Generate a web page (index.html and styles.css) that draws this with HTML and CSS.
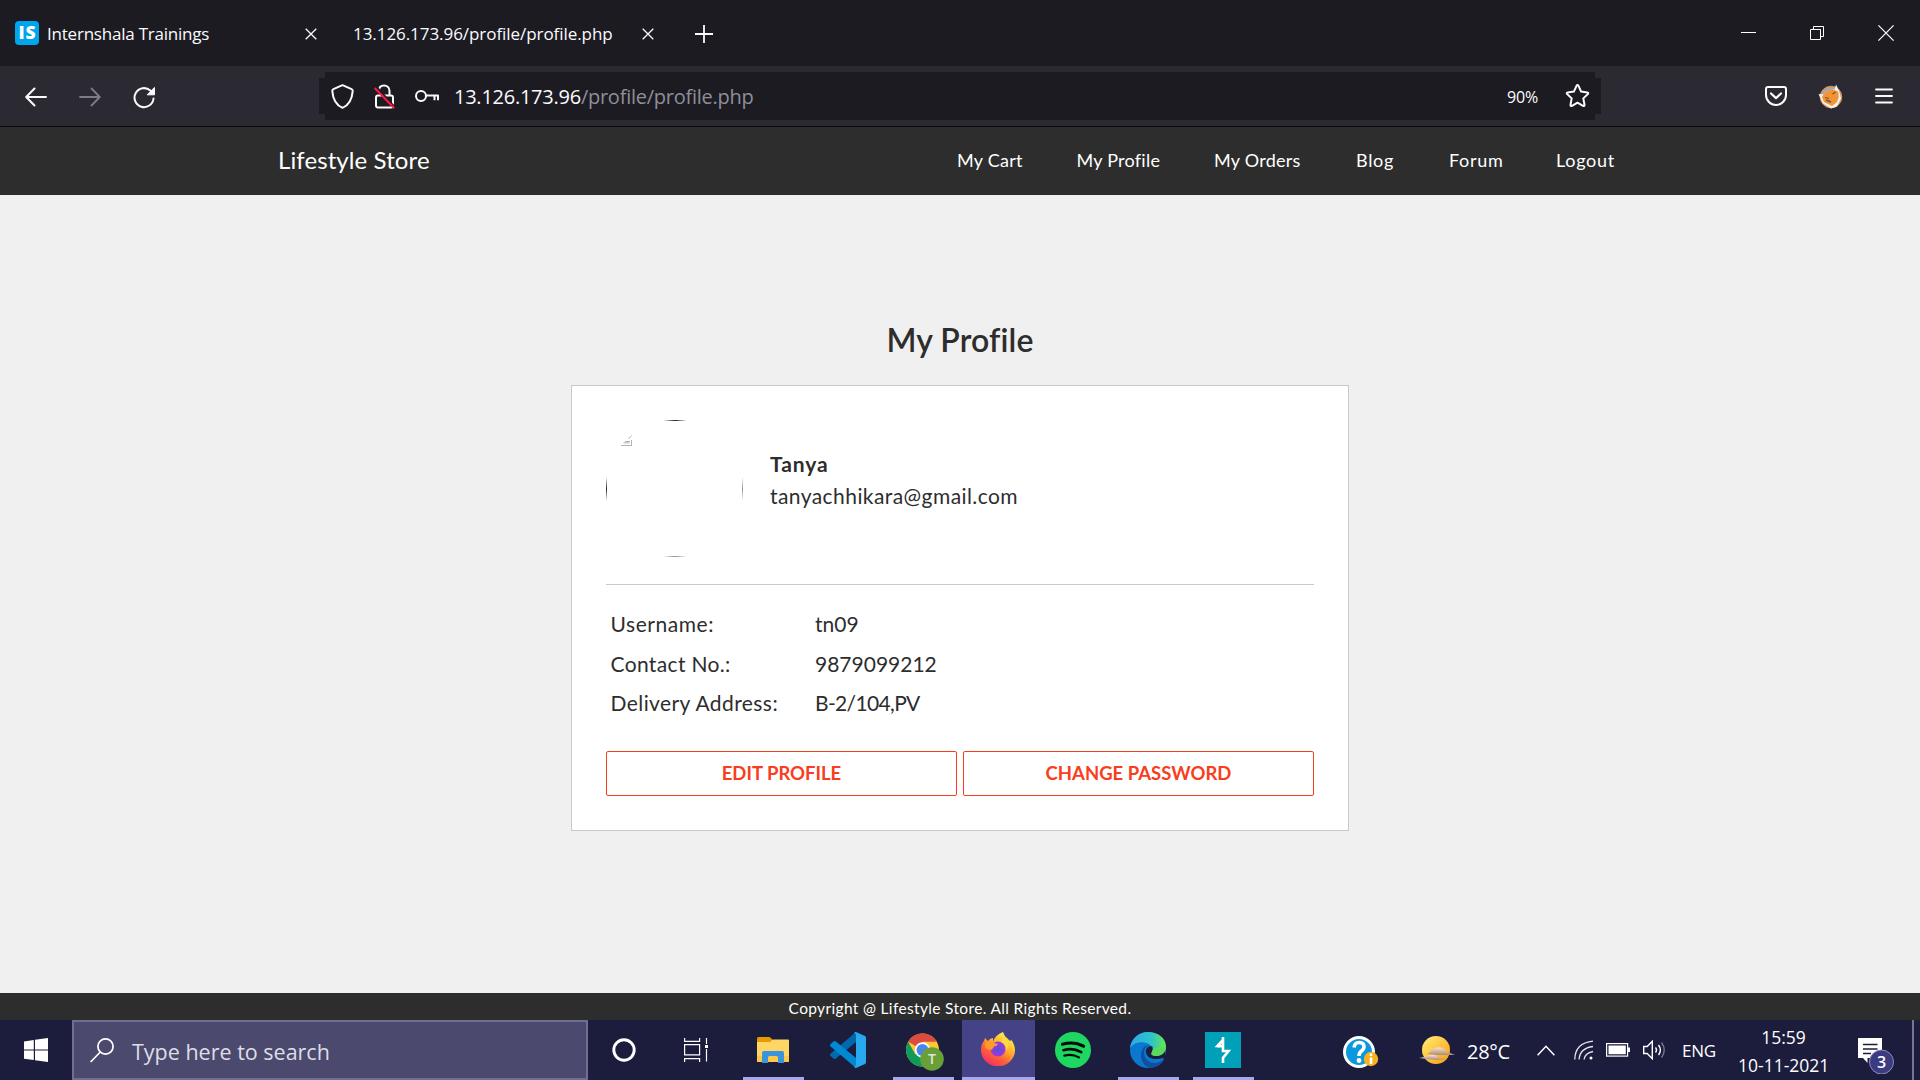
FILE: index.html
```html
<!DOCTYPE html>
<html lang="en">
<head>
<meta charset="utf-8">
<title>Lifestyle Store</title>
<link rel="stylesheet" href="styles.css">
</head>
<body>
<header class="tabs">
  <div class="tab tab-first">
    <svg class="favicon" width="24" height="24" viewBox="0 0 24 24"><rect width="24" height="24" rx="4" fill="#00a5ec"/><text x="12" y="18.4" text-anchor="middle" class="favicon-text" textLength="17">IS</text></svg>
    <span class="tab-title tab-title-narrow">Internshala Trainings</span>
    <svg class="tab-close" width="12" height="12" viewBox="0 0 12 12"><path d="M.7.7l10.600 10.600M11.300.7L.7 11.300" stroke="#fbfbfe" stroke-width="1.300"/></svg>
  </div>
  <div class="tab tab-second">
    <span class="tab-title">13.126.173.96/profile/profile.php</span>
    <svg class="tab-close" width="12" height="12" viewBox="0 0 12 12"><path d="M.7.7l10.600 10.600M11.300.7L.7 11.300" stroke="#fbfbfe" stroke-width="1.300"/></svg>
  </div>
  <svg class="new-tab" width="18" height="18" viewBox="0 0 18 18"><path d="M9 0v18M0 9h18" stroke="#fbfbfe" stroke-width="1.800"/></svg>
  <div class="window-buttons">
    <svg width="15" height="16" viewBox="0 0 15 16"><path d="M0 7.500h15" stroke="#fff"/></svg>
    <svg width="14" height="14" viewBox="0 0 14 14" fill="none" stroke="#fff"><path d="M.5 3.500h10v10H.5zM3.500 3.500v-3h10v10h-3"/></svg>
    <svg width="16" height="16" viewBox="0 0 16 16"><path d="M.4.4l15.200 15.200M15.600.4L.4 15.600" stroke="#fff" stroke-width="1.200"/></svg>
  </div>
</header>

<div class="toolbar">
  <div class="nav-buttons">
    <svg width="22" height="20" viewBox="0 0 22 20" fill="none" stroke="#fbfbfe" stroke-width="2" stroke-linecap="round" stroke-linejoin="round"><path d="M21 10H1.500M9.500 1.500L1.200 10l8.300 8.500"/></svg>
    <svg width="22" height="20" viewBox="0 0 22 20" fill="none" stroke="#7d7c84" stroke-width="1.800" stroke-linecap="round" stroke-linejoin="round"><path d="M1 10h19.500M12.500 1.500l8.300 8.500-8.300 8.500"/></svg>
    <svg width="23" height="23" viewBox="0 0 23 23" fill="none" stroke="#fbfbfe" stroke-width="2" stroke-linecap="round"><path d="M20.500 12.500A9.500 9.500 0 1 1 17.300 4.500l2 1.700"/><path d="M21.500 1.800v7h-7z" fill="#fbfbfe" stroke-width="1" stroke-linejoin="round"/></svg>
  </div>
  <div class="url-bar">
    <svg width="23" height="25" viewBox="0 0 23 25" fill="none" stroke="#fbfbfe" stroke-width="2" stroke-linejoin="round"><path d="M11.500 1.200l9.100 3.900c.9.400 1.200 1.100 1.100 2-.6 7.600-3.500 13.900-10.200 16.700C4.800 21 1.900 14.700 1.300 7.100c-.1-.9.200-1.600 1.100-2z"/></svg>
    <svg width="21" height="25" viewBox="0 0 21 25" fill="none" stroke="#fbfbfe" stroke-width="2"><path d="M5 6.500C5 3.500 7 1.500 10 1.500s5.500 2.300 5.500 5.500v4.500"/><rect x="2" y="11.500" width="17" height="12" rx="2"/><path d="M2.500 3l19 21" stroke="#1c1b22" stroke-width="2"/><path d="M.7 4l19.600 20.200" stroke="#ff1744" stroke-width="2"/></svg>
    <svg width="24" height="14" viewBox="0 0 24 14" fill="none" stroke="#fbfbfe" stroke-width="2"><circle cx="6" cy="7" r="5"/><path d="M11 6.500h12v4.800M19.500 6.500v4.800" stroke-linejoin="round"/></svg>
    <span class="url"><b>13.126.173.96</b>/profile/profile.php</span>
    <span class="zoom-level">90%</span>
    <svg width="25" height="24" viewBox="0 0 25 24" fill="none" stroke="#fbfbfe" stroke-width="2" stroke-linejoin="round"><path d="M11.500 1.800q1-1.400 2 0l2.600 5.800 6.200.8q1.600.4.500 1.700l-4.500 4.300 1.200 6.300q.1 1.700-1.500 1.100L12.500 18.700 7 21.800q-1.600.6-1.500-1.100l1.200-6.300-4.500-4.300q-1.100-1.300.5-1.700l6.200-.8z"/></svg>
  </div>
  <div class="tool-icons">
    <svg width="22" height="20" viewBox="0 0 22 20" fill="none" stroke="#fbfbfe" stroke-width="2" stroke-linecap="round" stroke-linejoin="round"><path d="M3 1h16q2 0 2 2v6a10 10 0 0 1-20 0V3q0-2 2-2z"/><path d="M6 7.500l5 4.600 5-4.600" stroke-width="2.200"/></svg>
    <svg width="25" height="25" viewBox="0 0 25 25"><circle cx="13" cy="13" r="10.800" fill="#a9a6a4" stroke="#ec8a35" stroke-width="1"/><path d="M.5 10l5 .5q5-5 11-5L18 .5l3 6q2 7 2 8l-4 8-6 2-8-5z" fill="#f2f0ee"/><path d="M4 13q3-6.500 11-7.500l5 2q2 6-1.500 11l-4.500 3.500-8-4z" fill="#f39333"/><path d="M7 13.500l4 1M14.500 10l3-2" stroke="#8c4c18" stroke-width="1.200"/><path d="M8 16l5 2" stroke="#5b5c66" stroke-width="1.800"/></svg>
    <svg width="18" height="16" viewBox="0 0 18 16"><path d="M1 1.500h16M1 8h16M1 14.500h16" stroke="#fbfbfe" stroke-width="1.800" stroke-linecap="round"/></svg>
  </div>
</div>

<nav class="site-nav">
  <a class="brand">Lifestyle Store</a>
  <div class="links"><a>My Cart</a><a>My Profile</a><a>My Orders</a><a class="wide">Blog</a><a class="wide">Forum</a><a class="wide">Logout</a></div>
</nav>

<main class="page">
  <h1>My Profile</h1>
  <section class="card">
    <div class="identity">
      <svg class="avatar" width="137" height="137" viewBox="0 0 137 137">
        <defs>
          <linearGradient id="fadeH"><stop offset="0" stop-color="#222" stop-opacity="0"/><stop offset=".5" stop-color="#222"/><stop offset="1" stop-color="#222" stop-opacity="0"/></linearGradient>
          <linearGradient id="fadeV" x2="0" y2="1"><stop offset="0" stop-color="#222" stop-opacity="0"/><stop offset=".5" stop-color="#222"/><stop offset="1" stop-color="#222" stop-opacity="0"/></linearGradient>
        </defs>
        <rect x="57" width="24" height="1" fill="url(#fadeH)"/><rect y="57" width="1" height="24" fill="url(#fadeV)"/>
        <rect x="57" y="136" width="24" height="1" fill="url(#fadeH)" opacity=".5"/><rect x="136" y="57" width="1" height="24" fill="url(#fadeV)" opacity=".5"/>
        <path d="M15 25.500h11M25.500 20v6M17.500 22.800h6M19 21.500h5M22.500 19l3-3.500" stroke="#b4b4b4" fill="none"/>
      </svg>
      <div class="who"><strong>Tanya</strong><span>tanyachhikara@gmail.com</span></div>
    </div>
    <dl class="details">
      <dt>Username:</dt><dd>tn09</dd>
      <dt>Contact No.:</dt><dd>9879099212</dd>
      <dt class="long">Delivery Address:</dt><dd class="address">B-2/104,PV</dd>
    </dl>
    <div class="actions"><a>EDIT PROFILE</a><a>CHANGE PASSWORD</a></div>
  </section>
</main>
<footer class="site-footer">Copyright @ Lifestyle Store. All Rights Reserved.</footer>

<div class="taskbar">
  <div class="start"><svg width="24" height="24" viewBox="0 0 24 24" fill="#fff"><path d="M0 3.400L9.800 2v9.500H0zM11 1.800L24 0v11.500H11zM0 12.600h9.800v9.500L0 20.700zM11 12.600h13V24l-13-1.800z"/></svg></div>
  <div class="search">
    <svg width="24" height="25" viewBox="0 0 24 25" fill="none" stroke="#fff" stroke-width="1.700"><circle cx="15.500" cy="8.500" r="7.600"/><path d="M10.300 14L.6 24"/></svg>
    <span>Type here to search</span>
  </div>
  <div class="slot small"><svg width="24" height="24" viewBox="0 0 24 24"><circle cx="12" cy="12" r="10.200" fill="none" stroke="#fff" stroke-width="2.900"/></svg></div>
  <div class="slot small last"><svg width="24" height="24" viewBox="0 0 24 24" fill="none" stroke="#fff" stroke-width="1.200"><path d="M.6 0v3.400h15V0M.6 24v-3.400h15V24M.6 6.600h15v10.200H.6zM22.500 0v6M22.500 11v12.500"/><path d="M21 7h3v3h-3z" fill="#fff" stroke="none"/></svg></div>
  <div class="slot open"><svg width="32" height="26" viewBox="0 0 32 26"><path d="M0 1.500Q0 0 1.500 0h11L15 2v4H0z" fill="#e59b00"/><path d="M0 5h13l2.500-2.500H31q1 0 1 1V24q0 1-1 1H1q-1 0-1-1z" fill="#ffd666"/><path d="M0 19h32v5q0 1-1 1H1q-1 0-1-1z" fill="#fcc84a"/><path d="M5 26V16q0-2 2-2h18.500q1.500 0 1.500 2v10h-6v-5.500q0-1.500-1.500-1.500h-7q-1.500 0-1.500 1.500V26z" fill="#3a94dc"/></svg></div>
  <div class="slot"><svg width="36" height="36" viewBox="0 0 36 36"><path d="M26 0v10L6 26.500q-1.400 1-2.600 0L.6 24q-1.200-1.300 0-2.600z" fill="#0069ad"/><path d="M26 36V26L6 9.500q-1.400-1-2.600 0L.6 12q-1.200 1.300 0 2.600z" fill="#0088d3"/><path d="M26 0l9 4q1 .6 1 1.800v24.400q0 1.200-1 1.800l-9 4q-1 .1-2-1.200l2-1V2.200l-2-1q1-1.300 2-1.200z" fill="#28a8ef"/></svg></div>
  <div class="slot open"><svg class="chrome" width="38" height="38" viewBox="0 0 38 38"><circle cx="16.500" cy="17" r="16.500" fill="#fcc934"/><path d="M16.500 17L2.200 8.800A16.500 16.500 0 0 1 30.800 8.800H16.500z" fill="#dd4b40"/><path d="M2.200 8.800A16.500 16.500 0 0 0 16.500 33.500L23.600 21.100 9.300 21.200z" fill="#109b5a"/><circle cx="16.500" cy="17" r="7.700" fill="#fff"/><circle cx="16.500" cy="17" r="6" fill="#4786ef"/><circle cx="26" cy="26" r="11.800" fill="#689f38"/><text x="26" y="31" text-anchor="middle" class="chrome-badge">T</text></svg></div>
  <div class="slot open active"><svg width="34" height="34" viewBox="0 0 34 34"><defs><linearGradient id="ff" x1=".85" y1=".1" x2=".25" y2="1"><stop offset="0" stop-color="#fff14d"/><stop offset=".35" stop-color="#ffb52d"/><stop offset=".65" stop-color="#ff6338"/><stop offset="1" stop-color="#f52a64"/></linearGradient><radialGradient id="ffc"><stop offset="0" stop-color="#5b4bdc"/><stop offset="1" stop-color="#9c3bd8"/></radialGradient></defs><path d="M22 0q1 4 5 7l2 2q1-.5 1-1.500 4 5 4 11A17 16 0 0 1 0 18q0-6 3-9l1-3 3 3q2-3 5-3v4q2-7 10-10z" fill="url(#ff)"/><circle cx="17" cy="17" r="7.500" fill="url(#ffc)"/><path d="M4 11q5-2 9 0l4 1q-1 2-4 2.500l-2 3q-4 1-7-2z" fill="#ff9a2b"/><path d="M20 10q6 2 5 9 4-5 1-11l-4-4z" fill="#ffdc3e"/></svg></div>
  <div class="slot"><svg width="36" height="36" viewBox="0 0 36 36" fill="none" stroke="#060b09" stroke-linecap="round"><circle cx="18" cy="18" r="18" fill="#1ed760" stroke="none"/><path d="M7.500 12.200q11.500-3.200 21 2" stroke-width="3.200"/><path d="M8.500 18.200q9.500-2.700 17.700 1.900" stroke-width="2.700"/><path d="M9.300 23.600q8-2 14.700 1.800" stroke-width="2.200"/></svg></div>
  <div class="slot open"><svg width="36" height="36" viewBox="0 0 36 36"><defs><linearGradient id="eg"><stop offset="0" stop-color="#2fa8e8"/><stop offset=".6" stop-color="#2cc4c8"/><stop offset="1" stop-color="#6be848"/></linearGradient></defs><circle cx="18" cy="18" r="18" fill="#0b78d0"/><path d="M0 16A18 18 0 0 1 18 0c11 0 18 7 18 14.500 0 6-4.500 9.500-9.500 9.500-4 0-6-1.500-5-3 2-3 1-9-7-10.500C8 9.500 3 12 0 16z" fill="url(#eg)"/><path d="M22 14c-6-2-9 4-7.500 9.500 2 8 12 9.500 18.500 4.500q1.500-.7 1 .5A18 18 0 0 1 20 36C10 33 9 20 14 15q4-3 8-1z" fill="#104f9c"/><path d="M22.500 14.500c-4-1-7 2-6.500 6 1 6 9 8 17 5.500l2 .5 1 3-1-12c-1 5-5 6.500-8.500 6.500-4 0-6-1.500-5-3q2-3 1-6.500z" fill="#1c1c3c"/><path d="M36 14.500c0 6-4.500 9.500-9.500 9.500-4 0-6-1.500-5-3l1.500-4z" fill="#5ddb58"/></svg></div>
  <div class="slot open"><svg width="36" height="36" viewBox="0 0 36 36"><rect width="36" height="36" fill="#00a1b8"/><path d="M18 5v9h-5.500L18 8M18 14l-5.500.5L18 14v5h5.500L18 26v5M18 19h6" fill="none" stroke="#fff" stroke-width="2.600"/></svg></div>

  <div class="tray">
    <svg width="36" height="32" viewBox="0 0 36 32"><circle cx="16" cy="16" r="14.500" fill="#0b98dc" stroke="#fff" stroke-width="3"/><path d="M11 11.500q.5-5 5.200-5 4.800 0 4.800 4.300 0 2.400-2.600 4.200-2.400 1.700-2.400 5" fill="none" stroke="#fff" stroke-width="3.600"/><circle cx="16" cy="24.500" r="2.400" fill="#fff"/><circle cx="28" cy="23" r="7.200" fill="#f8b120"/><path d="M28 21.500V28M28 17.500V20" stroke="#fff" stroke-width="2.600"/></svg>
    <svg width="38" height="30" viewBox="0 0 38 30"><defs><linearGradient id="sun" x2="1" y2="1"><stop offset="0" stop-color="#fff07a"/><stop offset="1" stop-color="#ff9a0a"/></linearGradient><linearGradient id="cloud" x2="0" y2="1"><stop offset="0" stop-color="#f6e4cf"/><stop offset="1" stop-color="#a98c78"/></linearGradient></defs><circle cx="18" cy="15" r="14" fill="url(#sun)"/><path d="M9 19q3-1 5-4 5-4 10-2 4 1 4 4 5 1 9 3H18z" fill="url(#cloud)"/><path d="M1 23q7-1 11-3 6-1 9 3 6 0 8 1-14 2-28-1z" fill="url(#cloud)"/></svg>
    <span class="temp">28°C</span>
    <svg class="up" width="18" height="11" viewBox="0 0 18 11"><path d="M.6 10.300L9 1.300l8.400 9" fill="none" stroke="#fff" stroke-width="1.500"/></svg>
    <svg width="20" height="20" viewBox="0 0 20 20" fill="none" stroke="#e5e5ef" stroke-width="1.300"><path d="M.8 19.500Q1 3 19 1.200M5 19.500Q6 8 19 6.500M10 19.500Q11 13 19 11.500"/><circle cx="17" cy="18" r="1.500" fill="#fff" stroke="none"/></svg>
    <svg width="24" height="14" viewBox="0 0 24 14"><rect x=".6" y=".6" width="21" height="12.500" fill="none" stroke="#fff" stroke-width="1.200"/><path d="M2.500 2.500h17.300v8.800H2.500zM22 4.500h2v4.500h-2z" fill="#fff"/></svg>
    <svg width="23" height="20" viewBox="0 0 23 20" fill="none" stroke="#fff" stroke-width="1.400"><path d="M.7 6.500h3.500L9.300 1.300v17.400L4.200 13.500H.7zM12.500 7.500q2 2.500 0 5M15.500 5q3.800 5 0 10"/><path d="M18.500 2.500q5.500 7.500 0 15" stroke="#77758f"/></svg>
    <span class="lang">ENG</span>
    <div class="clock"><span>15:59</span><span>10-11-2021</span></div>
    <svg class="notify" width="38" height="36" viewBox="0 0 38 36"><path d="M1 0h24v20H10.500v5L6 20H1z" fill="#fff"/><path d="M6 6.500h14.500M6 11h14.500M6 15.500h8" stroke="#1c1c3c" stroke-width="1.300"/><circle cx="24.500" cy="24" r="12" fill="#3d3b80" stroke="#8d8bbd" stroke-width="1"/><text x="24.500" y="29.800" text-anchor="middle" class="notify-count">3</text></svg>
    <i class="edge"></i>
  </div>
</div>
</body>
</html>
```
FILE: styles.css
```css
* { box-sizing: border-box; }
body {
  margin: 0;
  width: 1920px;
  height: 1080px;
  overflow: hidden;
  display: flex;
  flex-direction: column;
  font-family: "Open Sans", "Noto Sans", sans-serif;
  color: #fbfbfe;
  background: #f0f0f0;
}
svg { display: block; flex: none; }

/* Browser tab strip */
.tabs { height: 66px; flex: none; display: flex; align-items: center; background: #1c1b22; }
.tab { display: flex; align-items: center; }
.tab-first { width: 317px; padding-left: 15px; }
.tab-second { width: 337px; padding-left: 36px; }
.tab-title { font-size: 17px; line-height: 24px; letter-spacing: -0.06px; white-space: nowrap; padding-top: 1px; }
.tab-title-narrow { letter-spacing: -0.22px; }
.favicon { margin-right: 8px; }
.favicon-text { font: 800 17.5px "Open Sans", sans-serif; fill: #fff; }
.tab-close { margin: 1px 0 0 auto; }
.new-tab { margin: 2px 0 0 41px; }
.window-buttons { margin-left: auto; padding-right: 26px; display: flex; align-items: center; gap: 54px; }

/* Browser toolbar */
.toolbar { height: 61px; flex: none; display: flex; align-items: center; background: #2b2a33; border-bottom: 1px solid #0c0c0d; }
.nav-buttons { width: 319px; padding: 2px 0 0 25px; display: flex; align-items: center; gap: 32px; }
.url-bar {
  width: 1282px;
  height: 48px;
  display: flex;
  align-items: center;
  padding: 0 11px 0 12px;
  background: linear-gradient(#1c1b22, #1c1b22) 6px 0 / 1270px 48px no-repeat,
              linear-gradient(#1c1b22, #1c1b22) 0 6px / 1282px 36px no-repeat;
}
.url-bar svg { margin-right: 20px; }
.url-bar svg:last-child { margin-right: 0; }
.url { font-size: 20px; line-height: 28px; letter-spacing: -0.25px; color: #8f8f98; padding-top: 2px; margin-left: -5px; }
.url b { font-weight: 400; color: #fbfbfe; }
.zoom-level { margin-left: auto; margin-right: 27px; padding-top: 2px; font-size: 16px; letter-spacing: -0.2px; }
.tool-icons { margin-left: auto; padding-right: 27px; display: flex; align-items: center; gap: 31px; }
.tool-icons svg:nth-child(2) { margin-right: 1px; }

/* Store header */
.site-nav {
  height: 68px;
  flex: none;
  display: flex;
  align-items: center;
  justify-content: space-between;
  padding: 0 305px 2px 278px;
  background: #2d2d2d;
  font-family: Lato, sans-serif;
  color: #fff;
}
.brand { font-size: 24px; letter-spacing: 0.1px; padding-bottom: 1px; }
.links { display: grid; grid-template-columns: 119.500px 137.500px 142px 93px 107px 59px; font-size: 18px; letter-spacing: 0.25px; }
.links .wide { letter-spacing: 0.7px; }

/* Profile page */
.page { flex: 1; display: flex; flex-direction: column; align-items: center; padding-top: 125px; font-family: Lato, sans-serif; color: #2d2d2d; background: #f0f0f0; }
h1 { margin: 0 0 25px; font-size: 32px; line-height: 40px; font-weight: 600; letter-spacing: 0.1px; }
.card { width: 778px; height: 446px; padding: 34px; border: 1px solid #c9c9c9; background: #fff; font-size: 21px; }
.identity { height: 165px; display: flex; gap: 27px; border-bottom: 1px solid #c9c9c9; }
.who { display: flex; flex-direction: column; padding-top: 28px; line-height: 31.500px; letter-spacing: 0.43px; }
.who strong { letter-spacing: 0.9px; }
.details { margin: 19px 0 28px; padding-left: 4.500px; display: grid; grid-template-columns: 204.500px auto; grid-auto-rows: 39.500px; line-height: 39.500px; letter-spacing: 0.35px; }
.details dt:first-child { letter-spacing: 0.55px; }
.details dt.long { letter-spacing: 0.42px; }
.details dd { margin: 0; letter-spacing: 0; }
.details .address { letter-spacing: -0.65px; }
.actions { display: grid; grid-template-columns: 351px 351px; gap: 6px; }
.actions a { height: 45px; border: 1px solid #f93d20; border-radius: 2px; text-align: center; font-size: 18.500px; font-weight: 700; line-height: 42.500px; color: #f93d20; }

.site-footer { height: 27px; flex: none; padding-top: 2px; text-align: center; font: 15.500px/26px Lato, sans-serif; letter-spacing: 0.34px; color: #fff; background: #2d2d2d; }

/* Desktop taskbar */
.taskbar { height: 60px; flex: none; display: flex; background: #1c1c3c; color: #fff; }
.start { width: 72px; display: flex; align-items: center; justify-content: center; }
.search { width: 516px; display: flex; align-items: center; gap: 18px; padding-left: 16px; border: 2px solid #706e92; background: #4b4a6e; color: #dedee6; font-size: 21.500px; }
.search span { padding-top: 2px; }
.slot { width: 75px; height: 60px; display: flex; align-items: center; justify-content: center; padding-right: 1px; }
.slot.small { width: 72px; padding: 0; }
.slot.last { margin-right: 4px; }
.slot.open { background: linear-gradient(#aaa7ee, #aaa7ee) center bottom / 61px 3px no-repeat; }
.slot.active { width: 73px; margin: 0 1px; padding-bottom: 2px; background: linear-gradient(#aaa7ee, #aaa7ee) center bottom / 73px 3px no-repeat #444388; }
.chrome { margin: 4px 0 0 4px; }
.chrome-badge { font: 600 14px "Open Sans", sans-serif; fill: #dfe8d5; }
.tray { margin-left: auto; display: grid; grid-template-columns: 75px 49px 70px 37px 32px 37px 39px 56px 119px 55px 8px; align-items: center; }
.tray > svg:first-child { margin-top: 4px; }
.temp { font-size: 20px; letter-spacing: -0.3px; padding-top: 2px; }
.lang { font-size: 17px; letter-spacing: -0.3px; }
.clock { width: 91px; padding-top: 1px; text-align: center; font-size: 17.500px; line-height: 28px; display: flex; flex-direction: column; white-space: nowrap; }
.notify { margin-top: 12px; }
.notify-count { font: 600 16px "Open Sans", sans-serif; fill: #fff; }
.edge { width: 2px; height: 60px; background: #77758f; }
```
